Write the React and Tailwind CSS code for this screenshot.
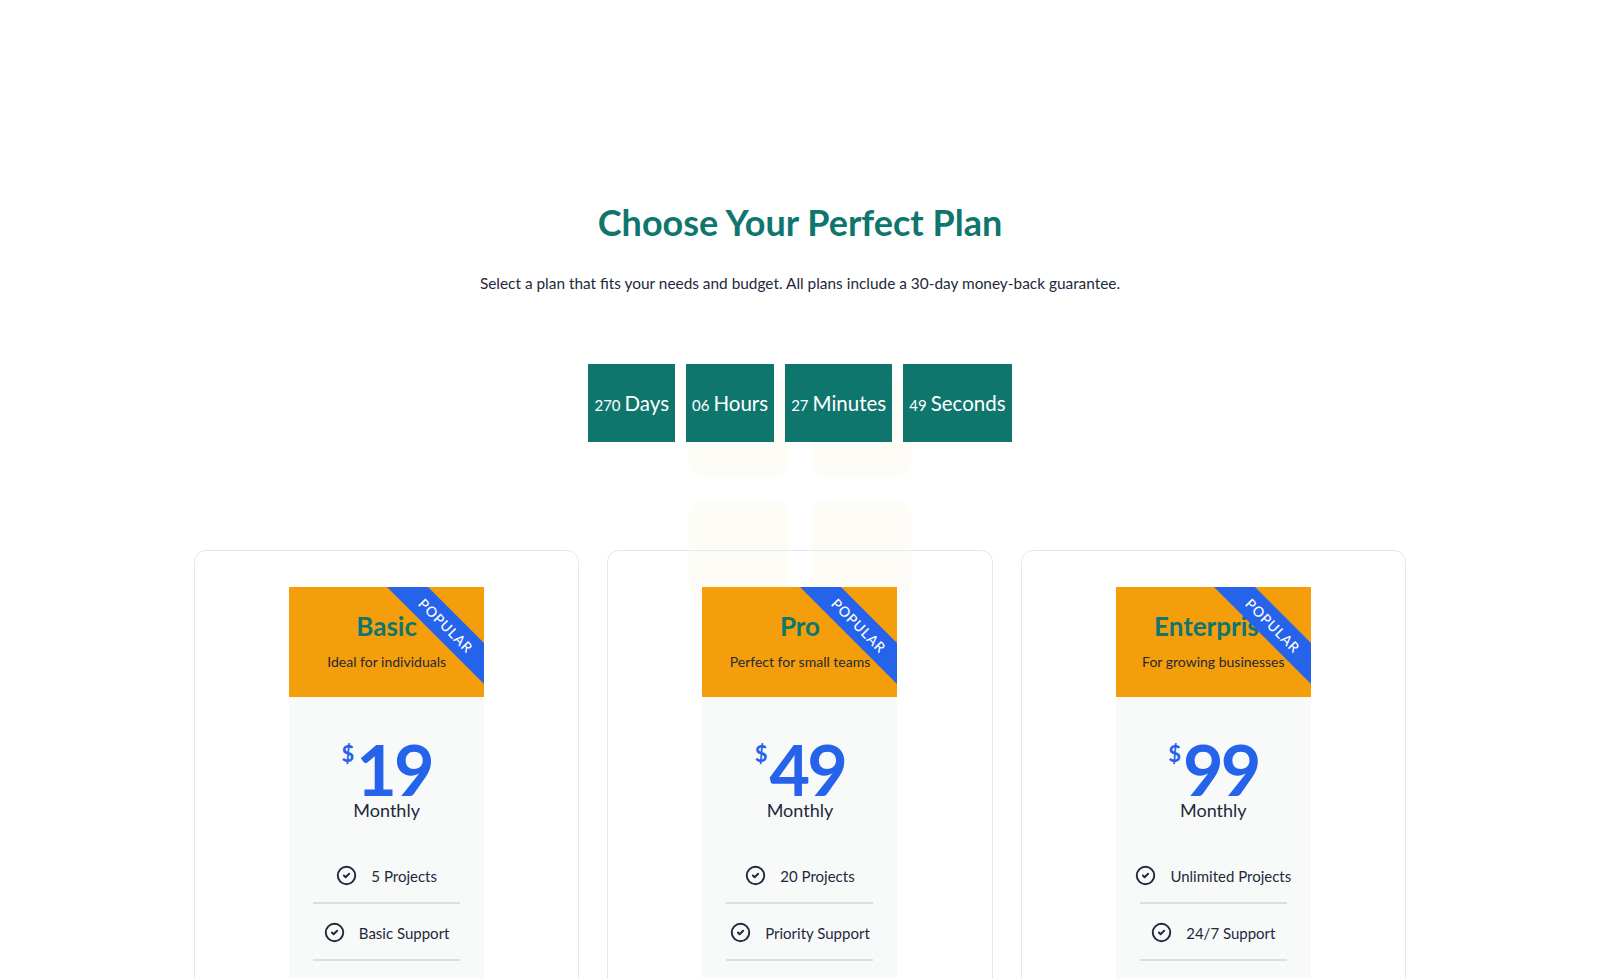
import { CircleCheck } from "lucide-react";

const plans = [
  {
    name: "Basic",
    tagline: "Ideal for individuals",
    price: "19",
    features: ["5 Projects", "Basic Support", "1 GB Storage"],
  },
  {
    name: "Pro",
    tagline: "Perfect for small teams",
    price: "49",
    features: ["20 Projects", "Priority Support", "10 GB Storage"],
  },
  {
    name: "Enterprise",
    tagline: "For growing businesses",
    price: "99",
    features: ["Unlimited Projects", "24/7 Support", "Unlimited Storage"],
  },
];

const countdown = [
  { value: "270", label: "Days" },
  { value: "06", label: "Hours" },
  { value: "27", label: "Minutes" },
  { value: "49", label: "Seconds" },
];

const PlanCard = ({ plan }) => (
  <div className="rounded-xl border border-[#e2e8f0] pt-[36px] pb-10">
    <div className="mx-auto w-[195px]">
      {/* Header */}
      <div className="relative h-[110px] overflow-hidden bg-[#f59e0b] pt-[23px] text-center">
        <h3 className="text-[26px] font-bold leading-[32px] text-[#0f766e]">
          {plan.name}
        </h3>
        <p className="mt-[10px] text-[14px] leading-5 text-[#1f2937]">
          {plan.tagline}
        </p>
        <div className="absolute right-[-42px] top-[24px] flex h-[29px] w-[160px] rotate-45 items-center justify-center bg-[#2563eb] text-[14px] font-medium tracking-[0.06em] text-white">
          POPULAR
        </div>
      </div>

      {/* Price + features */}
      <div className="bg-[#f8fafa] pt-[42px] pb-8 text-center">
        <div className="flex items-start justify-center text-[#2563eb]">
          <span className="mt-[4px] mr-[2px] block text-[22px] font-bold leading-[22px]">
            $
          </span>
          <span className="block text-[70px] font-bold leading-[60px] tracking-[-0.04em]">
            {plan.price}
          </span>
        </div>
        <p className="-mt-[1px] text-[18px] leading-6 text-[#1e293b]">
          Monthly
        </p>

        <ul className="mt-[42px]">
          {plan.features.map((f) => (
            <li key={f}>
              <div className="flex h-6 items-center justify-center gap-[14px] text-[15px] text-[#1e293b]">
                <CircleCheck className="h-[21px] w-[21px] -mt-[1px]" strokeWidth={2.2} />
                <span>{f}</span>
              </div>
              <div className="mx-auto mt-[14px] mb-[17px] h-[2px] w-[147px] bg-[#dcdee0]" />
            </li>
          ))}
        </ul>
      </div>
    </div>
  </div>
);

export default function App() {
  return (
    <div
      className="relative min-h-screen overflow-hidden bg-white"
      style={{ fontFamily: "Lato, 'Noto Sans', sans-serif" }}
    >
      {/* faint decoration */}
      <div className="absolute left-[calc(50%-111px)] top-[378px] z-0 grid grid-cols-2 gap-[22px]">
        <div className="h-[100px] w-[100px] rounded-2xl bg-[#fdfcf6]" />
        <div className="h-[100px] w-[100px] rounded-2xl bg-[#fdfcf6]" />
        <div className="h-[100px] w-[100px] rounded-2xl bg-[#fdfcf6]" />
        <div className="h-[100px] w-[100px] rounded-2xl bg-[#fdfcf6]" />
      </div>

      <section className="relative z-10 pt-[200px] text-center">
        <h1 className="text-[36px] font-bold leading-[44px] text-[#0f766e]">
          Choose Your Perfect Plan
        </h1>
        <p className="mt-[27px] text-[15.4px] leading-6 text-[#1e293b]">
          Select a plan that fits your needs and budget. All plans include a
          30-day money-back guarantee.
        </p>

        {/* Countdown */}
        <div className="mt-[69px] flex justify-center gap-[11px]">
          {countdown.map((c) => (
            <div
              key={c.label}
              className="flex h-[78px] items-center bg-[#0f766e] px-[6px] text-white"
            >
              <div className="flex items-baseline">
                <span className="text-[15px]">{c.value}</span>
                <span className="ml-[4px] text-[20.5px]">{c.label}</span>
              </div>
            </div>
          ))}
        </div>

        {/* Plans */}
        <div className="mx-auto mt-[108px] grid w-[1212px] grid-cols-3 gap-7">
          {plans.map((p) => (
            <PlanCard key={p.name} plan={p} />
          ))}
        </div>
      </section>
    </div>
  );
}
